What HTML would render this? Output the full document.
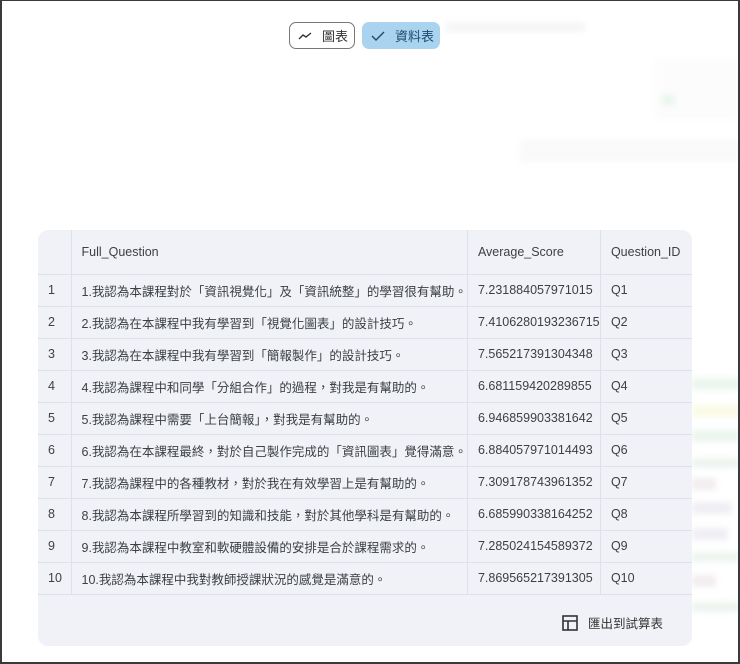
<!DOCTYPE html>
<html><head><meta charset="utf-8"><style>
*{margin:0;padding:0;box-sizing:border-box}
body{width:740px;height:664px;background:#fff;position:relative;overflow:hidden;font-family:"Liberation Sans","Noto Sans CJK TC",sans-serif;color:#3c4043}
.frame{position:absolute;left:0;top:0;width:740px;height:664px;border:2px solid #3a3a3a;border-top-width:1px;pointer-events:none;z-index:10}
.blur{position:absolute;filter:blur(3px)}
.btn{position:absolute;top:22px;height:27px;border-radius:7px;font-size:13px;display:flex;align-items:center}
.card{position:absolute;left:38px;top:230px;width:654px;height:416px;background:#f0f2f7;border-radius:10px;overflow:hidden}
table{border-collapse:collapse;width:654px;font-size:12.5px;font-family:"Liberation Sans","Noto Sans CJK TC",sans-serif}
td,th{border-right:1px solid #dde1e8;border-bottom:1px solid #dde1e8;text-align:left;font-weight:normal;padding:0 0 0 10px;white-space:nowrap;color:#3c4043}
th{height:44px}
td{height:32px}
td:last-child,th:last-child{border-right:none}
</style></head><body>
<div class="blur" style="left:445px;top:22px;width:140px;height:10px;background:#f6f6f6"></div>
<div class="blur" style="left:655px;top:60px;width:85px;height:60px;background:#fcfcfc"></div>
<div class="blur" style="left:662px;top:95px;width:12px;height:10px;background:#e6f6ec"></div>
<div class="blur" style="left:520px;top:140px;width:220px;height:22px;background:#f9f9f9"></div>
<div class="blur" style="left:692px;top:378px;width:48px;height:12px;background:#ebf5ee"></div>
<div class="blur" style="left:692px;top:405px;width:48px;height:12px;background:#fafae6"></div>
<div class="blur" style="left:692px;top:430px;width:48px;height:12px;background:#ebf5ee"></div>
<div class="blur" style="left:692px;top:458px;width:48px;height:10px;background:#edf4ee"></div>
<div class="blur" style="left:692px;top:478px;width:24px;height:12px;background:#f2edf0"></div>
<div class="blur" style="left:692px;top:502px;width:40px;height:12px;background:#f0eef3"></div>
<div class="blur" style="left:692px;top:528px;width:36px;height:12px;background:#f0eef3"></div>
<div class="blur" style="left:692px;top:552px;width:48px;height:10px;background:#edf4ee"></div>
<div class="blur" style="left:692px;top:575px;width:24px;height:12px;background:#f2edf0"></div>
<div class="blur" style="left:692px;top:602px;width:48px;height:10px;background:#edf4ee"></div>

<div class="btn" style="left:289px;width:66px;border:1px solid #777;background:#fff;color:#333">
<svg width="14" height="10" style="margin-left:8px" viewBox="0 0 14 10"><path d="M1 8 L5 4 L8 6 L13 2" fill="none" stroke="#333" stroke-width="1.4"/></svg>
<span style="margin-left:10px">圖表</span></div>
<div class="btn" style="left:362px;width:78px;background:#a9d3ef;color:#1e4a6c">
<svg width="14" height="12" style="margin-left:9px" viewBox="0 0 14 12"><path d="M1 6 L5 10 L13 2" fill="none" stroke="#1e4a6c" stroke-width="1.4"/></svg>
<span style="margin-left:10px">資料表</span></div>

<div class="card">
<table>
<tr><th style="width:33px"></th><th style="width:396px">Full_Question</th><th style="width:133px">Average_Score</th><th>Question_ID</th></tr>
<tr><td>1</td><td>1.我認為本課程對於「資訊視覺化」及「資訊統整」的學習很有幫助。</td><td>7.231884057971015</td><td>Q1</td></tr>
<tr><td>2</td><td>2.我認為在本課程中我有學習到「視覺化圖表」的設計技巧。</td><td>7.4106280193236715</td><td>Q2</td></tr>
<tr><td>3</td><td>3.我認為在本課程中我有學習到「簡報製作」的設計技巧。</td><td>7.565217391304348</td><td>Q3</td></tr>
<tr><td>4</td><td>4.我認為課程中和同學「分組合作」的過程，對我是有幫助的。</td><td>6.681159420289855</td><td>Q4</td></tr>
<tr><td>5</td><td>5.我認為課程中需要「上台簡報」，對我是有幫助的。</td><td>6.946859903381642</td><td>Q5</td></tr>
<tr><td>6</td><td>6.我認為在本課程最終，對於自己製作完成的「資訊圖表」覺得滿意。</td><td>6.884057971014493</td><td>Q6</td></tr>
<tr><td>7</td><td>7.我認為課程中的各種教材，對於我在有效學習上是有幫助的。</td><td>7.309178743961352</td><td>Q7</td></tr>
<tr><td>8</td><td>8.我認為本課程所學習到的知識和技能，對於其他學科是有幫助的。</td><td>6.685990338164252</td><td>Q8</td></tr>
<tr><td>9</td><td>9.我認為本課程中教室和軟硬體設備的安排是合於課程需求的。</td><td>7.285024154589372</td><td>Q9</td></tr>
<tr><td>10</td><td>10.我認為本課程中我對教師授課狀況的感覺是滿意的。</td><td>7.869565217391305</td><td>Q10</td></tr>
</table>
<div style="position:absolute;left:524px;top:383px;display:flex;align-items:center;font-size:12.5px;color:#333">
<svg width="16" height="16" viewBox="0 0 16 16"><rect x="1" y="1" width="14" height="14" fill="none" stroke="#333" stroke-width="1.6"/><path d="M1 6H15M6 6V15" stroke="#333" stroke-width="1.6"/></svg>
<span style="margin-left:10px">匯出到試算表</span></div>
</div>
<div class="frame"></div>
</body></html>
